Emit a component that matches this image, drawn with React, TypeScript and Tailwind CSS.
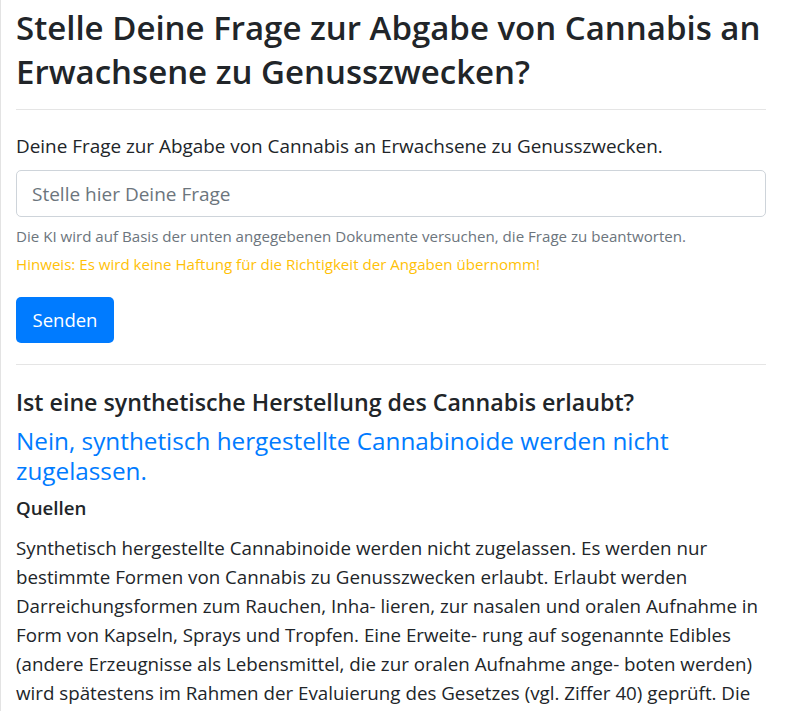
import { useState } from 'react';

const SOURCE_TEXT =
  'Synthetisch hergestellte Cannabinoide werden nicht zugelassen. Es werden nur bestimmte Formen von Cannabis zu Genusszwecken erlaubt. Erlaubt werden Darreichungsformen zum Rauchen, Inha- lieren, zur nasalen und oralen Aufnahme in Form von Kapseln, Sprays und Tropfen. Eine Erweite- rung auf sogenannte Edibles (andere Erzeugnisse als Lebensmittel, die zur oralen Aufnahme ange- boten werden) wird spätestens im Rahmen der Evaluierung des Gesetzes (vgl. Ziffer 40) geprüft. Die Freigabe von Pflanzensamen für den Eigenanbau wird ebenfalls geprüft.';

export default function App() {
  const [question, setQuestion] = useState('');

  return (
    <div className="min-h-screen bg-white border-l border-[#e3e3e3] font-['Open_Sans',sans-serif] text-[#212529]">
      <div className="pl-[15px] pr-8 pt-[6px]">
        <h1 className="text-[33px] leading-[44px] font-semibold">
          Stelle Deine Frage zur Abgabe von Cannabis an Erwachsene zu Genusszwecken?
        </h1>
        <hr className="mt-[15px] border-t border-[#e5e5e5]" />

        <form
          className="flex flex-col items-start"
          onSubmit={(e) => e.preventDefault()}
        >
          <label className="mt-[22px] text-[18.9px] leading-[29px]">
            Deine Frage zur Abgabe von Cannabis an Erwachsene zu Genusszwecken.
          </label>
          <input
            value={question}
            onChange={(e) => setQuestion(e.target.value)}
            placeholder="Stelle hier Deine Frage"
            className="mt-[9px] w-full h-[47px] px-[15px] rounded-[5px] border border-[#ced4da] text-[19px] placeholder:text-[#6c757d] outline-none"
          />
          <small className="mt-[8px] text-[15.1px] leading-[23px] text-[#6c757d]">
            Die KI wird auf Basis der unten angegebenen Dokumente versuchen, die Frage zu beantworten.
          </small>
          <small className="mt-[5px] text-[15.1px] leading-[23px] text-[#ffc107]">
            Hinweis: Es wird keine Haftung für die Richtigkeit der Angaben übernomm!
          </small>
          <button
            type="submit"
            className="mt-[21px] h-[46px] w-[98px] rounded-[5px] bg-[#007bff] text-white text-[18.5px]"
          >
            Senden
          </button>
        </form>

        <hr className="mt-[21px] border-t border-[#e5e5e5]" />

        <section className="pt-[23px]">
          <h4 className="text-[23.2px] leading-[29px] font-semibold">
            Ist eine synthetische Herstellung des Cannabis erlaubt?
          </h4>
          <h3 className="mt-[9px] text-[24.3px] leading-[30px] text-[#007bff]">
            Nein, synthetisch hergestellte Cannabinoide werden nicht zugelassen.
          </h3>
          <h6 className="mt-[10px] text-[18.7px] leading-[23px] font-semibold">Quellen</h6>
          <p className="mt-[14px] text-[18.75px] leading-[29px]">{SOURCE_TEXT}</p>
        </section>
      </div>
    </div>
  );
}
